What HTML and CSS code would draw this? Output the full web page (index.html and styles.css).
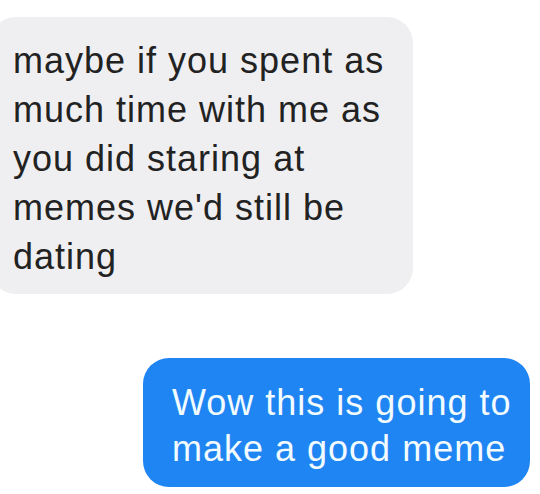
FILE: index.html
```html
<!DOCTYPE html>
<html>
<head>
<meta charset="utf-8">
<link rel="stylesheet" href="styles.css">
</head>
<body>
<div class="thread">
  <div class="bubble received">maybe if you spent as<br>much time with me as<br>you did staring at<br>memes we'd still be<br>dating</div>
  <div class="bubble sent">Wow this is going to<br>make a good meme</div>
</div>
</body>
</html>
```
FILE: styles.css
```css
html, body {
  margin: 0;
  padding: 0;
  background: #ffffff;
}
body {
  width: 540px;
  height: 494px;
  overflow: hidden;
  font-family: "Liberation Sans", Arial, sans-serif;
}
.thread {
  display: flex;
  flex-direction: column;
  padding-top: 17px;
}
.bubble {
  font-size: 36px;
  letter-spacing: 1px;
  border-radius: 26px;
}
.received {
  align-self: flex-start;
  margin-left: -10px;
  width: 423px;
  box-sizing: border-box;
  padding: 19px 10px 13px 23px;
  line-height: 49px;
  background: #efeff1;
  color: #222222;
}
.sent {
  align-self: flex-end;
  margin-top: 64px;
  margin-right: 10px;
  width: 387px;
  box-sizing: border-box;
  padding: 22px 10px 15px 29px;
  line-height: 46px;
  background: #1f85f2;
  color: #f2fbff;
}
```
